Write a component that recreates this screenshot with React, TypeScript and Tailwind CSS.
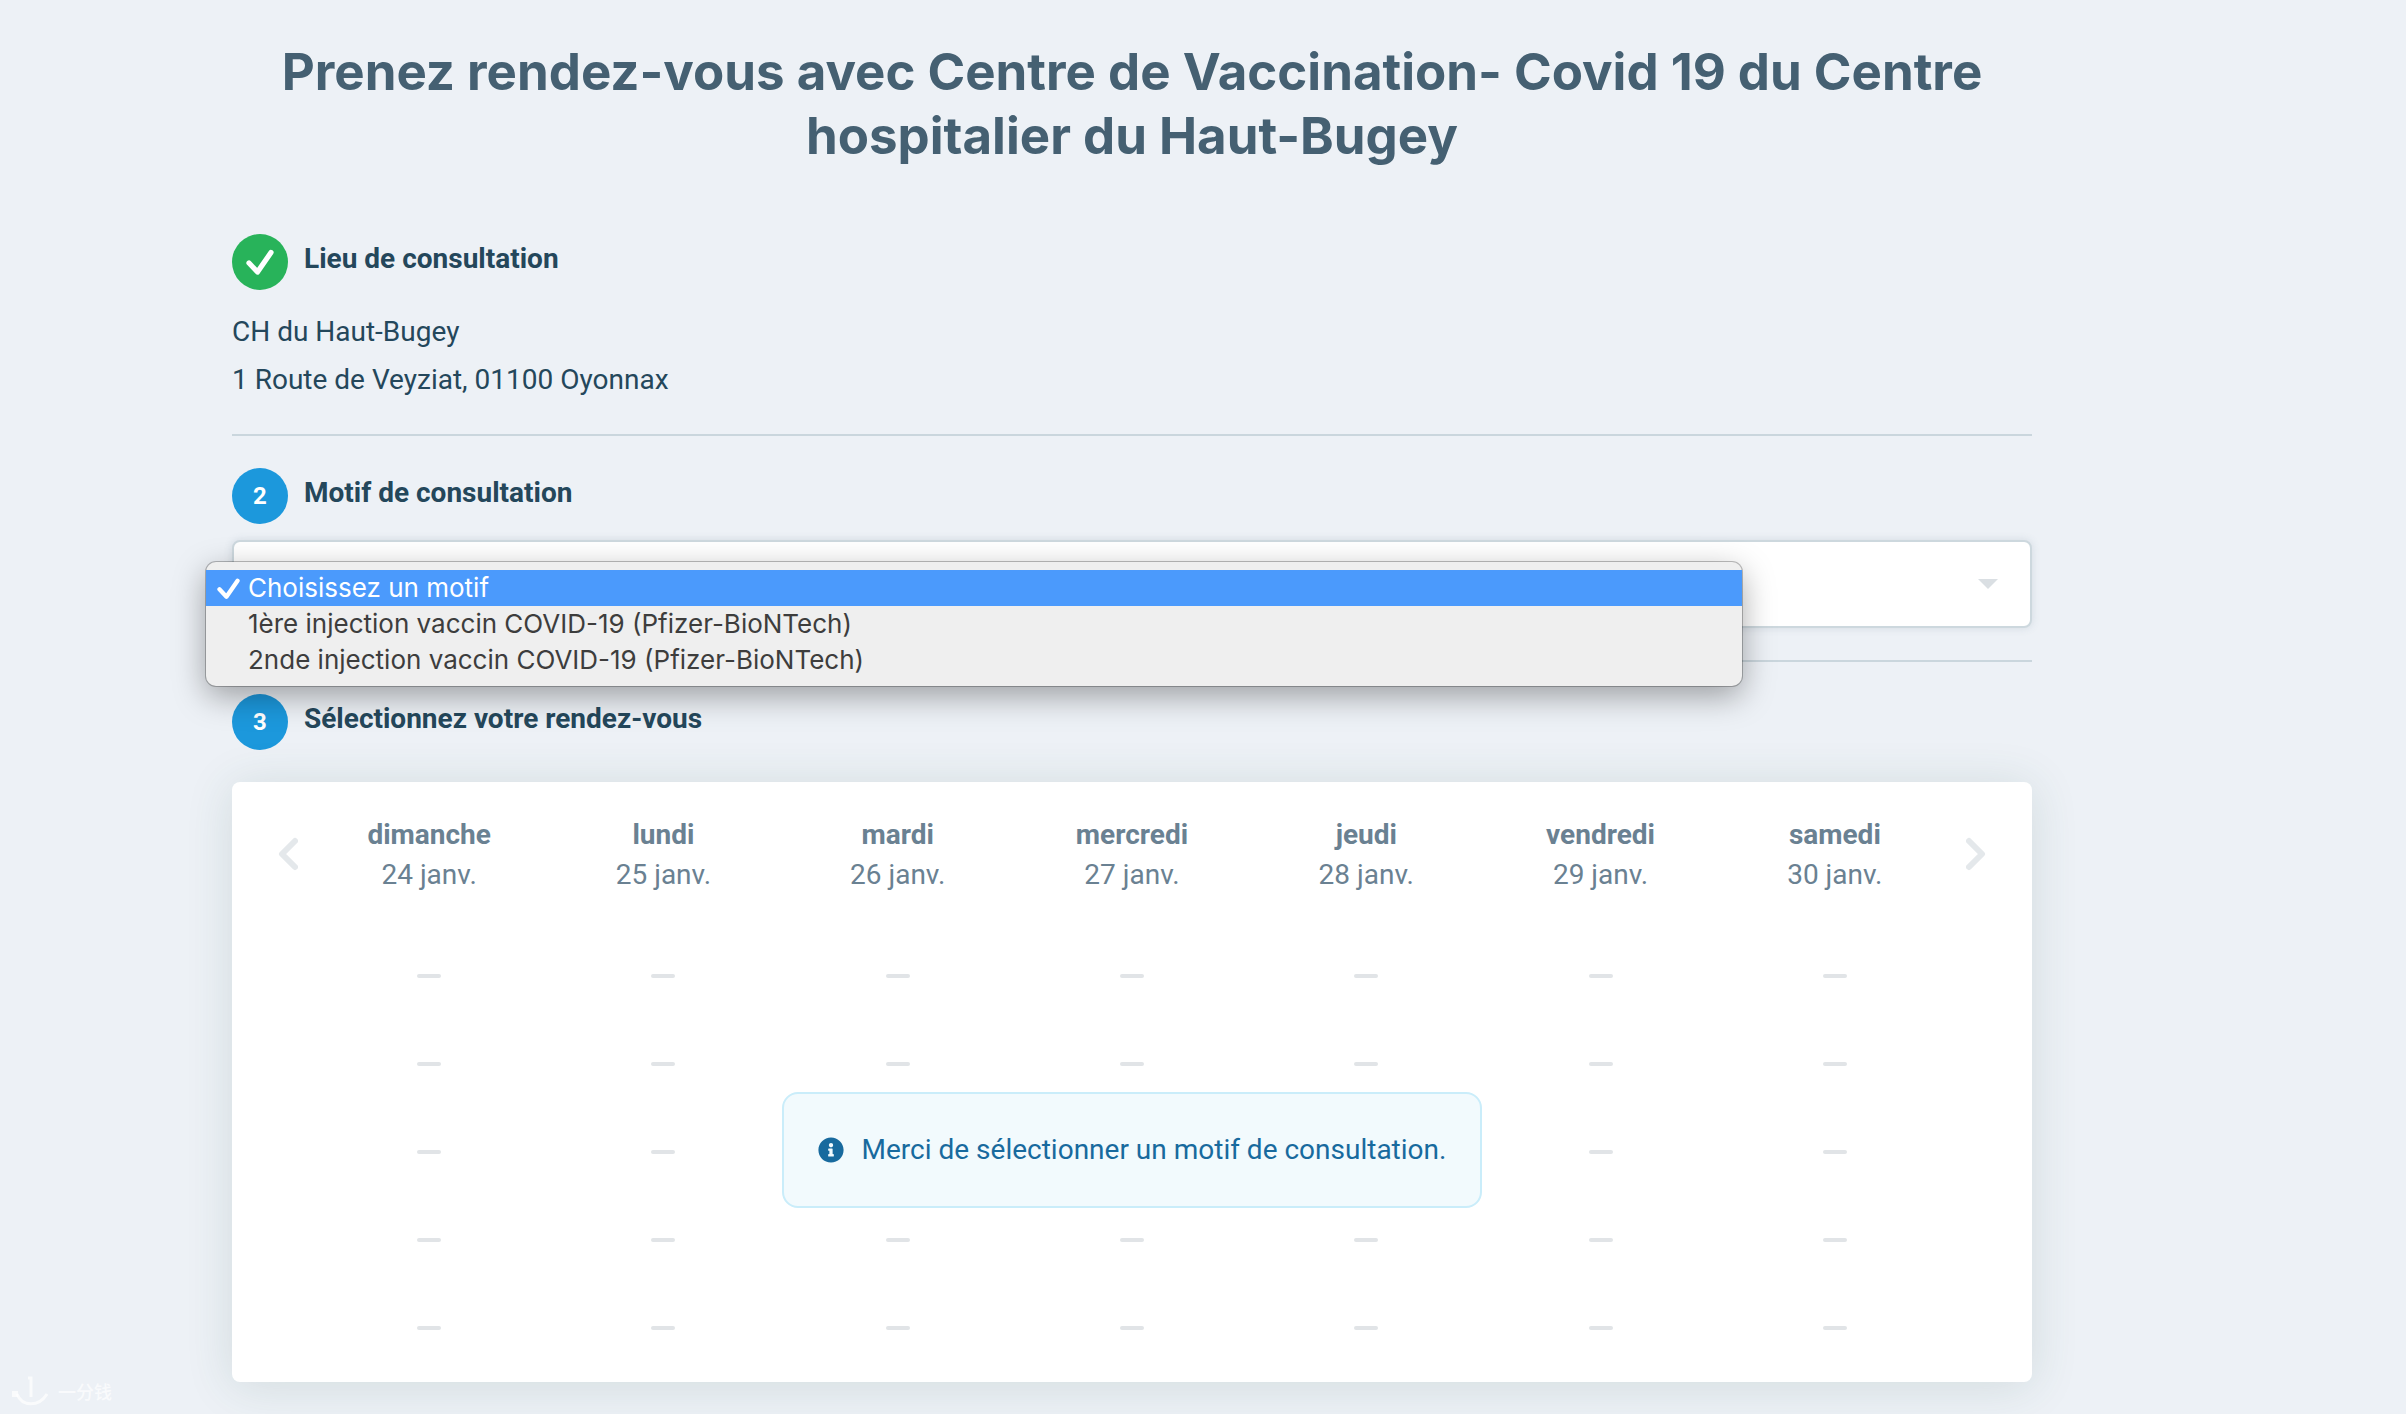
import { useState } from 'react';
import type { ReactNode } from 'react';
import { FaInfoCircle } from 'react-icons/fa';

const motives = [
  { value: '', label: 'Choisissez un motif' },
  { value: 'first', label: '1ère injection vaccin COVID-19 (Pfizer-BioNTech)' },
  { value: 'second', label: '2nde injection vaccin COVID-19 (Pfizer-BioNTech)' },
];

const days = [
  { name: 'dimanche', date: '24 janv.' },
  { name: 'lundi', date: '25 janv.' },
  { name: 'mardi', date: '26 janv.' },
  { name: 'mercredi', date: '27 janv.' },
  { name: 'jeudi', date: '28 janv.' },
  { name: 'vendredi', date: '29 janv.' },
  { name: 'samedi', date: '30 janv.' },
];

const slotRows = [0, 1, 2, 3, 4];

function CheckMark({ className }: { className: string }) {
  return (
    <svg viewBox="0 0 28 28" fill="none" aria-hidden="true" className={className}>
      <path
        d="M3 15 L11.500 24 L25 4.500"
        stroke="currentColor"
        strokeWidth="5.2"
        strokeLinecap="round"
        strokeLinejoin="round"
      />
    </svg>
  );
}

function Chevron({ d }: { d: string }) {
  return (
    <svg viewBox="0 0 20 34" fill="none" aria-hidden="true" className="h-[34px] w-5">
      <path
        d={d}
        stroke="currentColor"
        strokeWidth="6"
        strokeLinecap="round"
        strokeLinejoin="round"
      />
    </svg>
  );
}

function StepHeading({
  badge,
  badgeClass,
  children,
}: {
  badge: ReactNode;
  badgeClass: string;
  children: ReactNode;
}) {
  return (
    <div className="flex items-start gap-4">
      <span
        className={`flex size-14 shrink-0 items-center justify-center rounded-full text-2xl font-bold text-white ${badgeClass}`}
      >
        {badge}
      </span>
      <h2 className="text-[28px] leading-[50px] font-bold">{children}</h2>
    </div>
  );
}

function MotiveSelect() {
  const [motive, setMotive] = useState('');

  return (
    <div className="relative mt-4">
      <select
        aria-label="Motif de consultation"
        value={motive}
        onChange={(e) => setMotive(e.target.value)}
        className="block h-22 w-full appearance-none rounded-lg border-2 border-[#cdd8de] bg-white px-8 text-[28px] shadow-[0_0_8px_rgba(67,95,113,0.15)]"
      >
        {motives.map((m) => (
          <option key={m.value} value={m.value}>
            {m.label}
          </option>
        ))}
      </select>
      <svg
        viewBox="0 0 20 10"
        aria-hidden="true"
        className="pointer-events-none absolute top-[39px] right-[34px] h-[10px] w-5 text-[#dadfe3]"
      >
        <path d="M0 0h20L10 10z" fill="currentColor" />
      </svg>

      <ul
        role="listbox"
        aria-label="Motifs disponibles"
        className="absolute top-[22px] right-[290px] -left-[26px] z-10 rounded-[10px] bg-[#efefef] py-2 font-[Inter,sans-serif] text-[26px] leading-9 text-[#3d3d3d] shadow-[0_0_0_1px_rgba(0,0,0,0.25),0_10px_32px_rgba(0,0,0,0.35)]"
      >
        {motives.map((m) => (
          <li
            key={m.value}
            role="option"
            aria-selected={m.value === motive}
            onClick={() => setMotive(m.value)}
            className={
              m.value === motive
                ? 'flex items-center bg-[#4b9afc] pl-[11px] text-white'
                : 'flex items-center pl-[11px]'
            }
          >
            <span className="w-[31px]">
              {m.value === motive && <CheckMark className="size-[23px]" />}
            </span>
            {m.label}
          </li>
        ))}
      </ul>
    </div>
  );
}

function Calendar() {
  return (
    <div className="relative mt-8 flex items-start rounded-lg bg-white pt-8 pb-[10px] text-[#6a8192] shadow-[0_4px_48px_rgba(40,90,80,0.14)]">
      <button
        type="button"
        aria-label="Semaine précédente"
        className="flex h-20 w-20 shrink-0 items-center justify-start pl-[46px] text-[#e4e8eb]"
      >
        <Chevron d="M17 4 L4 17 L17 30" />
      </button>

      <div className="min-w-0 flex-1">
        <table className="w-full table-fixed text-center text-[28px] leading-10">
          <thead>
            <tr className="h-[118px] align-top">
              {days.map((day) => (
                <th key={day.name} scope="col" className="pt-px font-normal">
                  <div className="font-bold">{day.name}</div>
                  <div>{day.date}</div>
                </th>
              ))}
            </tr>
          </thead>
          <tbody>
            {slotRows.map((row) => (
              <tr key={row} className="h-22">
                {days.map((day) => (
                  <td key={day.name}>
                    <div className="mx-auto h-1 w-6 rounded-full bg-[#e1e4e7]" />
                  </td>
                ))}
              </tr>
            ))}
          </tbody>
        </table>
      </div>

      <button
        type="button"
        aria-label="Semaine suivante"
        className="flex h-20 w-20 shrink-0 items-center justify-end pr-[46px] text-[#e4e8eb]"
      >
        <Chevron d="M3 4 L16 17 L3 30" />
      </button>

      <div className="absolute inset-x-0 top-[310px] flex justify-center">
        <p
          role="status"
          className="flex items-center gap-[18px] rounded-2xl border-2 border-[#caedfa] bg-[#f2fafd] px-[34px] py-8 text-[28px] leading-12 text-[#186a9e]"
        >
          <FaInfoCircle className="size-[26px]" />
          Merci de sélectionner un motif de consultation.
        </p>
      </div>
    </div>
  );
}

function Watermark() {
  return (
    <div className="absolute bottom-2 left-3 flex items-center gap-[10px] text-white/70">
      <svg viewBox="0 0 36 30" fill="none" aria-hidden="true" className="h-[30px] w-9">
        <path d="M16 2h3v19" stroke="currentColor" strokeWidth="3" />
        <path d="M5 18C10 31 27 31 35 18" stroke="currentColor" strokeWidth="3" />
        <rect y="15" width="6" height="6" fill="currentColor" />
      </svg>
      <span className="font-['Noto_Sans_CJK_SC',sans-serif] text-lg font-medium">一分钱</span>
    </div>
  );
}

export default function App() {
  return (
    <div className="relative min-h-screen overflow-hidden bg-[#edf1f6] pr-[374px] pb-8 pl-[232px] font-[Roboto,sans-serif] text-[#24475b]">
      <h1 className="pt-10 text-center font-[Inter,sans-serif] text-[51px] leading-16 font-bold text-[#456072]">
        Prenez rendez-vous avec Centre de Vaccination- Covid 19 du Centre hospitalier du
        Haut-Bugey
      </h1>

      <section className="mt-[66px] border-b-2 border-[#cad6dd] pb-[30px]">
        <StepHeading
          badge={<CheckMark className="size-7" />}
          badgeClass="bg-[#28b35a]"
        >
          Lieu de consultation
        </StepHeading>
        <div className="mt-[18px] text-[28px] leading-12">
          <p>CH du Haut-Bugey</p>
          <p>1 Route de Veyziat, 01100 Oyonnax</p>
        </div>
      </section>

      <section className="border-b-2 border-[#cad6dd] py-8">
        <StepHeading badge="2" badgeClass="bg-[#1c98dc]">
          Motif de consultation
        </StepHeading>
        <MotiveSelect />
      </section>

      <section className="pt-8">
        <StepHeading badge="3" badgeClass="bg-[#1c98dc]">
          Sélectionnez votre rendez-vous
        </StepHeading>
        <Calendar />
      </section>

      <Watermark />
    </div>
  );
}
